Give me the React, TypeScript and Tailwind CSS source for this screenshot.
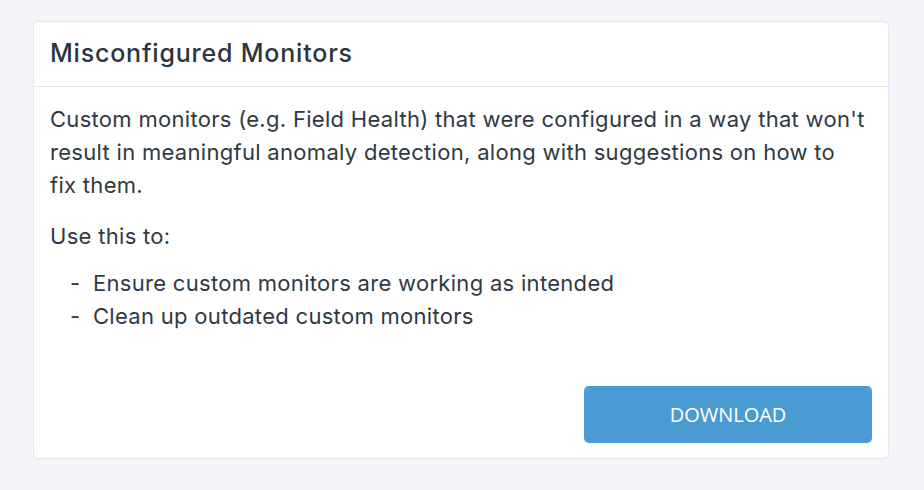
export default function App() {
  return (
    <div className="min-h-screen bg-[#f4f5f9] pt-[21px] pl-[33px] pr-[35px] font-['Inter','Liberation_Sans',sans-serif] text-[#2f3943]">
      <div className="w-[856px] h-[438px] flex flex-col rounded-[5px] border border-[#e4e7ec] bg-white">
        <div className="h-[65px] flex items-center px-4 border-b border-[#e4e7ec]">
          <h2 className="text-[25px] font-medium tracking-[0.8px] text-[#2b353f]">Misconfigured Monitors</h2>
        </div>
        <div className="flex-1 flex flex-col px-4 pt-4 pb-[15px] text-[22px] leading-[33px] tracking-[0.3px]">
          <p className="whitespace-nowrap">
            Custom monitors (e.g. Field Health) that were configured in a way that won't
            <br />
            result in meaningful anomaly detection, along with suggestions on how to
            <br />
            fix them.
          </p>
          <p className="mt-[18px]">Use this to:</p>
          <ul className="mt-[14px] pl-[20px]">
            <li className="flex"><span className="w-[23px]">-</span><span>Ensure custom monitors are working as intended</span></li>
            <li className="flex"><span className="w-[23px]">-</span><span>Clean up outdated custom monitors</span></li>
          </ul>
          <div className="mt-auto flex justify-end">
            <button className="w-[288px] h-[57px] rounded-[5px] bg-[#4b9bd3] text-white text-[20px] tracking-normal font-['Open_Sans',sans-serif]">
              DOWNLOAD
            </button>
          </div>
        </div>
      </div>
    </div>
  );
}
